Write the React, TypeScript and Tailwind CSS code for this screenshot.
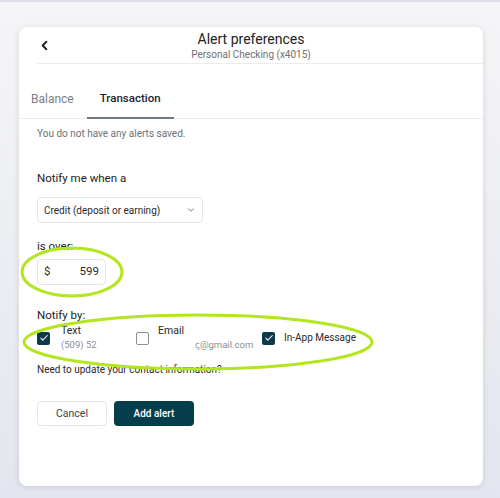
import { ChevronLeft, ChevronDown, Check } from "lucide-react"

function Box({ checked }: { checked: boolean }) {
    return checked ? (
        <span className="flex h-[13px] w-[13px] items-center justify-center rounded-[2px] bg-[#0b3b4a]">
            <Check className="h-[10px] w-[10px] text-white" strokeWidth={2.5} />
        </span>
    ) : (
        <span className="h-[13px] w-[13px] rounded-[2px] border border-[#8a8f96] bg-white" />
    )
}

export default function App() {
    return (
        <div
            className="relative h-[498px] w-[500px] overflow-hidden border-t-2 border-[#dde2ea] bg-gradient-to-b from-[#f5f5f7] to-[#e3e6ee] pt-[25px] pl-[19px]"
            style={{ fontFamily: "Roboto, 'Liberation Sans', sans-serif" }}
        >
            <div className="relative flex h-[459px] w-[464px] flex-col rounded-lg bg-white shadow-[0_1px_6px_rgba(0,0,0,0.12)]">
                {/* Header */}
                <div className="relative flex flex-col items-center pt-[3px] pb-[1px]">
                    <button className="absolute left-[18px] top-[11px] text-[#222]">
                        <ChevronLeft className="h-[15px] w-[15px]" strokeWidth={3} />
                    </button>
                    <div className="text-[14px] leading-[18px] text-[#222]">Alert preferences</div>
                    <div className="text-[10px] leading-[14px] text-[#707070]">Personal Checking (x4015)</div>
                </div>
                <div className="ml-[18px] border-b border-[#ececec]" />

                {/* Tabs */}
                <div className="mt-[26px] flex border-b border-[#ececec] text-[12px]">
                    <div className="px-[12px] pb-[10px] text-[#7a8088]">Balance</div>
                    <div className="-mb-px ml-[1px] border-b-2 border-[#6f7a82] px-[13px] pb-[8px] text-[11.5px] font-medium text-[#1f2328]">
                        Transaction
                    </div>
                </div>

                <div className="flex flex-col px-[18px]">
                    <div className="mt-[8px] text-[10px] leading-[14px] text-[#6b7178]">You do not have any alerts saved.</div>

                    <div className="mt-[29px] text-[11.5px] leading-[16px] text-[#222]">Notify me when a</div>
                    <div className="mt-[11px] flex h-[26px] w-[166px] items-center justify-between rounded-[4px] border border-[#e6e6e6] px-[6px] text-[10px] text-[#2a2a2a]">
                        <span>Credit (deposit or earning)</span>
                        <ChevronDown className="h-[10px] w-[10px] text-[#666]" strokeWidth={2} />
                    </div>

                    <div className="mt-[15px] text-[11.5px] leading-[16px] text-[#222]">is over:</div>
                    <div className="mt-[5px] flex h-[26px] w-[69px] items-center justify-between rounded-[4px] border border-[#e6e6e6] px-[6px] text-[11.5px] text-[#2a2a2a]">
                        <span>$</span>
                        <span>599</span>
                    </div>

                    <div className="mt-[22px] text-[11.5px] leading-[16px] text-[#222]">Notify by:</div>
                    <div className="mt-[1px] flex items-center text-[10.5px]">
                        <div className="flex w-[99px] items-center">
                            <Box checked />
                            <div className="ml-[11px] flex flex-col">
                                <span className="leading-[14px] text-[#2a2a2a]">Text</span>
                                <span className="text-[9.5px] leading-[14px] text-[#8a8f96]">(509) 52</span>
                            </div>
                        </div>
                        <div className="flex w-[126px] items-center">
                            <Box checked={false} />
                            <div className="ml-[9px] flex flex-col">
                                <span className="leading-[14px] text-[#2a2a2a]">Email</span>
                                <span className="pl-[37px] text-[9.5px] leading-[14px] text-[#8a8f96]">ꞔ@gmail.com</span>
                            </div>
                        </div>
                        <div className="flex items-center">
                            <Box checked />
                            <span className="ml-[9px] text-[10px] leading-[14px] text-[#2a2a2a]">In-App Message</span>
                        </div>
                    </div>

                    <div className="mt-[11px] text-[10px] leading-[14px] text-[#2a2a2a]">Need to update your contact information?</div>

                    <div className="mt-[24px] flex gap-[7px]">
                        <button className="h-[25px] w-[70px] rounded-[4px] border border-[#e6e6e6] bg-white text-[10.5px] text-[#3a3f45]">
                            Cancel
                        </button>
                        <button className="h-[25px] w-[80px] rounded-[4px] bg-[#063d4c] text-[10px] font-medium text-white">
                            Add alert
                        </button>
                    </div>
                </div>
            </div>

            {/* Highlighter marks */}
            <svg className="pointer-events-none absolute left-0 top-0" width="500" height="498">
                <ellipse cx="72" cy="270" rx="50" ry="24" fill="none" stroke="#b3e61f" strokeWidth="3" />
                <ellipse cx="198" cy="340" rx="174" ry="27" fill="none" stroke="#b3e61f" strokeWidth="3" />
            </svg>
        </div>
    )
}
